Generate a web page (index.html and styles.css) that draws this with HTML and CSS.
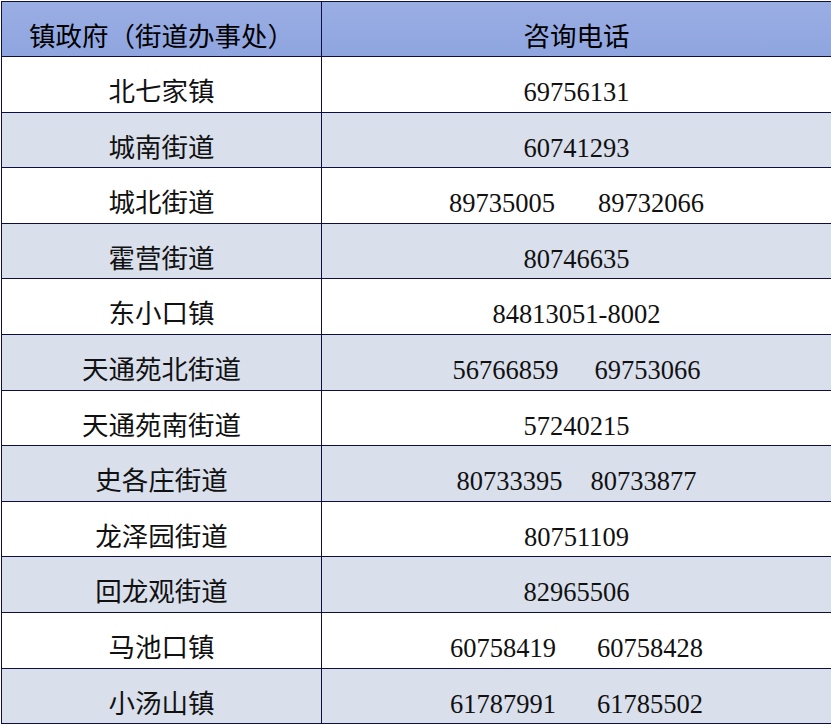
FILE: index.html
```html
<!DOCTYPE html>
<html lang="zh-CN">
<head>
<meta charset="utf-8">
<title>咨询电话</title>
<link rel="stylesheet" href="styles.css">
</head>
<body>
<table class="phone-table">
  <thead>
    <tr class="head-row">
      <th class="col-name">镇政府（街道办事处）</th>
      <th class="col-phone">咨询电话</th>
    </tr>
  </thead>
  <tbody>
    <tr class="row-odd"><td>北七家镇</td><td>69756131</td></tr>
    <tr class="row-even"><td>城南街道</td><td>60741293</td></tr>
    <tr class="row-odd"><td>城北街道</td><td><span class="num">89735005</span><span class="num gap-43">89732066</span></td></tr>
    <tr class="row-even"><td>霍营街道</td><td>80746635</td></tr>
    <tr class="row-odd"><td>东小口镇</td><td>84813051-8002</td></tr>
    <tr class="row-even"><td>天通苑北街道</td><td><span class="num">56766859</span><span class="num gap-36">69753066</span></td></tr>
    <tr class="row-odd"><td>天通苑南街道</td><td>57240215</td></tr>
    <tr class="row-even"><td>史各庄街道</td><td><span class="num">80733395</span><span class="num gap-28">80733877</span></td></tr>
    <tr class="row-odd"><td>龙泽园街道</td><td>80751109</td></tr>
    <tr class="row-even"><td>回龙观街道</td><td>82965506</td></tr>
    <tr class="row-odd"><td>马池口镇</td><td><span class="num">60758419</span><span class="num gap-41">60758428</span></td></tr>
    <tr class="row-even"><td>小汤山镇</td><td><span class="num">61787991</span><span class="num gap-41">61785502</span></td></tr>
  </tbody>
</table>
</body>
</html>
```

FILE: styles.css
```css
html, body {
  margin: 0;
  padding: 0;
  background: #ffffff;
}

.phone-table {
  margin: 1px 0 0 1px;
  border-collapse: collapse;
  table-layout: fixed;
  width: 829px;
  font-family: "Liberation Serif", "Noto Sans CJK SC", serif;
  font-size: 26.5px;
  font-weight: 400;
  line-height: 30px;
  color: #111111;
}

.phone-table th,
.phone-table td {
  border: 1px solid #0e0e42;
  padding: 20px 0 0 0;
  vertical-align: top;
  text-align: center;
  white-space: nowrap;
  font-weight: 400;
}

.head-row {
  height: 55px;
}

.row-odd,
.row-even {
  height: 55.6px;
}

.col-name {
  width: 319px;
}

.col-phone {
  width: 509px;
}

.head-row {
  background: linear-gradient(180deg, #9aaee4 0%, #8fa5df 100%);
}

.head-row th {
  color: #000000;
}

.row-odd {
  background: #ffffff;
}

.row-even {
  background: #d9dfeb;
}

.num {
  display: inline-block;
}

.gap-43 { margin-left: 43px; }
.gap-41 { margin-left: 41px; }
.gap-36 { margin-left: 36px; }
.gap-28 { margin-left: 28px; }
```
